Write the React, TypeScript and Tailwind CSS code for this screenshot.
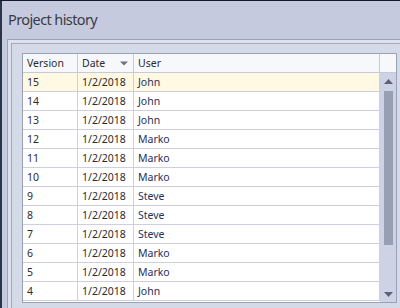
const rows = [
  { v: "15", d: "1/2/2018", u: "John" },
  { v: "14", d: "1/2/2018", u: "John" },
  { v: "13", d: "1/2/2018", u: "John" },
  { v: "12", d: "1/2/2018", u: "Marko" },
  { v: "11", d: "1/2/2018", u: "Marko" },
  { v: "10", d: "1/2/2018", u: "Marko" },
  { v: "9", d: "1/2/2018", u: "Steve" },
  { v: "8", d: "1/2/2018", u: "Steve" },
  { v: "7", d: "1/2/2018", u: "Steve" },
  { v: "6", d: "1/2/2018", u: "Marko" },
  { v: "5", d: "1/2/2018", u: "Marko" },
  { v: "4", d: "1/2/2018", u: "John" },
];

export default function App() {
  return (
    <div className="w-[400px] h-[308px] overflow-hidden bg-[#c5cadf] flex flex-col font-['Noto_Sans',sans-serif] text-[#2b2b2b]">
      <div className="h-px bg-[#111b2b] shrink-0" />
      <div className="flex-1 flex min-h-0">
        <div className="w-[2px] bg-[#2a3549] shrink-0" />
        <div className="flex-1 flex flex-col min-w-0">
          {/* Title */}
          <div className="h-[38px] shrink-0 pl-[6px] pt-[8px] text-[14.5px] tracking-[-0.6px] text-[#3b3b45]">Project history</div>

          {/* Outer panel */}
          <div className="flex-1 ml-[5px] border-l border-t border-[#9ea4b8] bg-[#dde1ed] pl-[3px] pt-[3px] min-h-0 flex flex-col">
            <div className="flex-1 border-l border-t border-[#a3a9bc] bg-[#d5dae8] pl-[10px] pt-[9px] min-h-0">
              {/* Grid */}
              <div className="w-[375px] h-[250px] border border-[#9ba1b4] bg-white flex flex-col overflow-hidden text-[10.5px]">
                <div className="h-[19px] shrink-0 flex bg-[#f7f8fc] border-b border-[#c6c9da]">
                  <div className="w-[55px] border-r border-[#c6c9da] pl-[4px] leading-[18px]">Version</div>
                  <div className="w-[56px] border-r border-[#c6c9da] pl-[4px] leading-[18px] flex items-center justify-between pr-[5px]">
                    <span>Date</span>
                    <svg width="8" height="5" viewBox="0 0 8 5">
                      <path d="M0 0.5 H8 L4 4.5 Z" fill="#6e7382" />
                    </svg>
                  </div>
                  <div className="w-[246px] border-r border-[#c6c9da] pl-[4px] leading-[18px]">User</div>
                  <div className="w-[16px]" />
                </div>
                <div className="flex-1 flex min-h-0">
                  <div className="w-[357px] flex flex-col">
                    {rows.map((r, i) => (
                      <div
                        key={r.v}
                        className={`h-[19px] shrink-0 flex border-b border-[#cfcde0] ${i === 0 ? "bg-[#fff8e2]" : "bg-white"}`}
                      >
                        <div className="w-[55px] border-r border-[#cfcde0] pl-[4px] leading-[18px]">{r.v}</div>
                        <div className="w-[56px] border-r border-[#cfcde0] pl-[4px] leading-[18px]">{r.d}</div>
                        <div className="w-[246px] border-r border-[#cfcde0] pl-[4px] leading-[18px] text-[#28305c]">{r.u}</div>
                      </div>
                    ))}
                  </div>
                  {/* Scrollbar */}
                  <div className="w-[16px] bg-[#cdd3e4] flex flex-col items-center">
                    <svg className="mt-[6px] shrink-0" width="9" height="5" viewBox="0 0 9 5">
                      <path d="M4.5 0 L9 5 H0 Z" fill="#5b6478" />
                    </svg>
                    <div className="mt-[7px] w-[9px] h-[154px] bg-[#96a0b2] shrink-0" />
                    <div className="flex-1" />
                    <svg className="mb-[5px] shrink-0" width="9" height="5" viewBox="0 0 9 5">
                      <path d="M0 0 H9 L4.5 5 Z" fill="#5b6478" />
                    </svg>
                  </div>
                </div>
              </div>
            </div>
          </div>
        </div>
      </div>
    </div>
  );
}
